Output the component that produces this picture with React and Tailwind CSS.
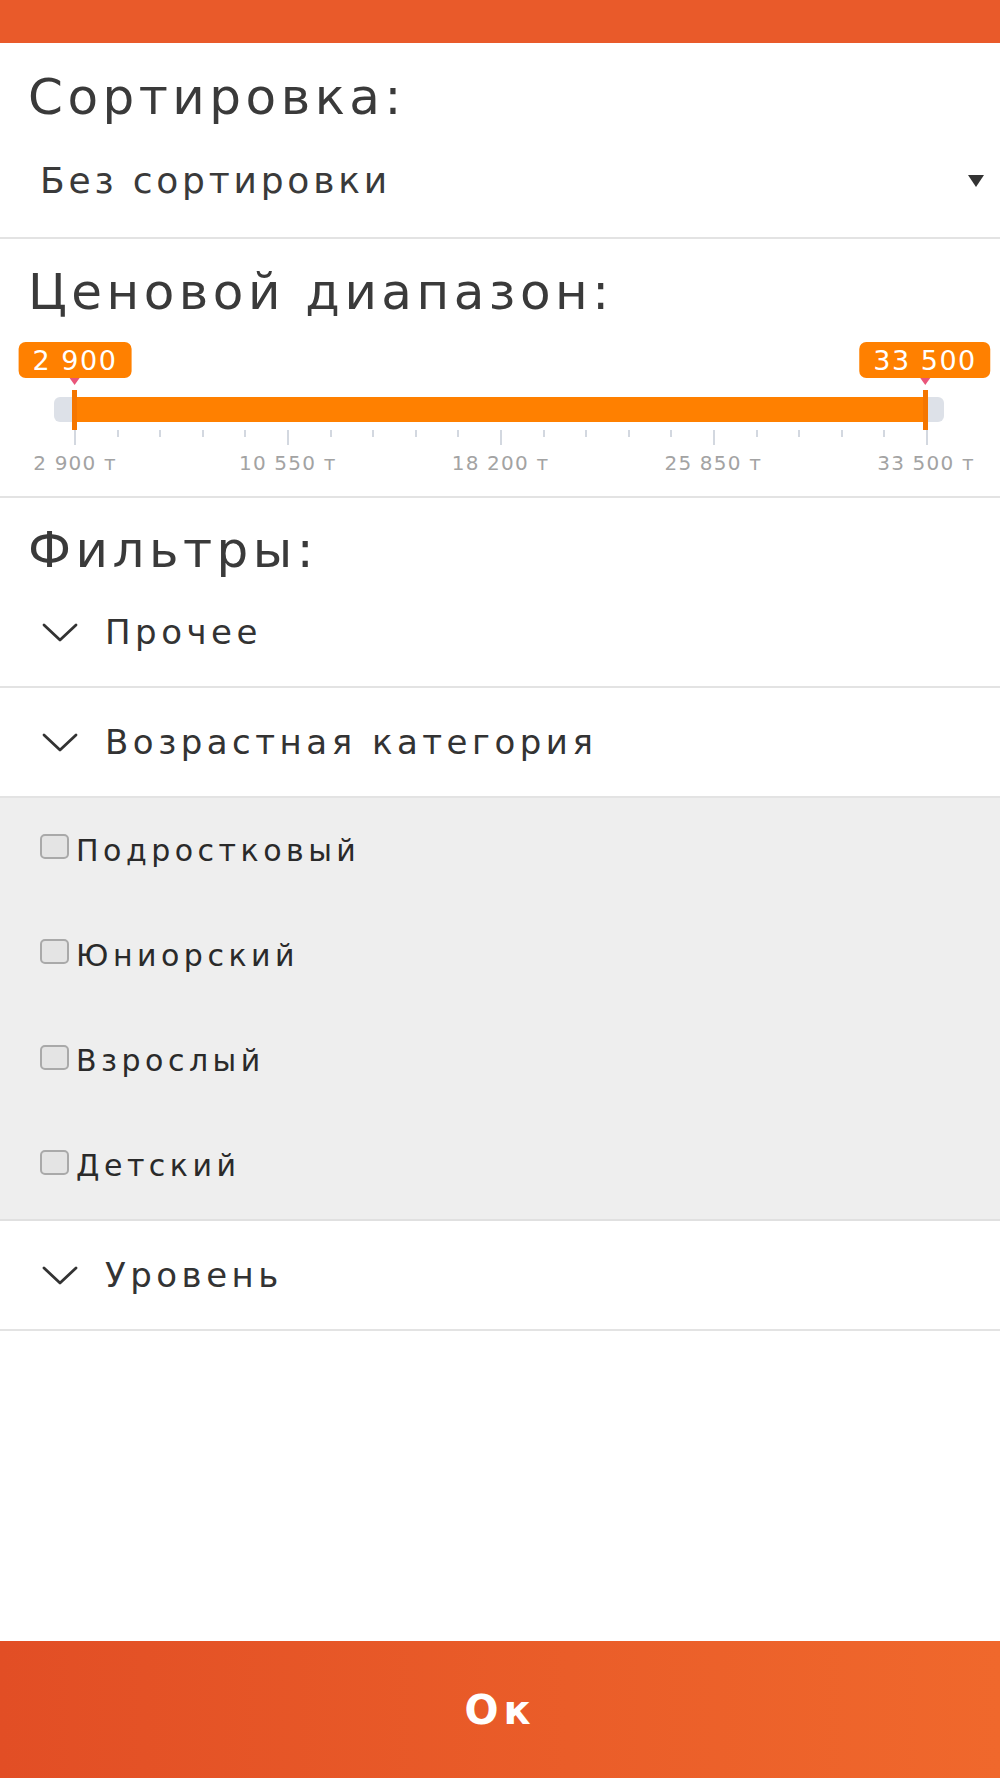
import React from "react";

// Tick marks under the price slider: 21 ticks, every 5th is a long one
const ticks = Array.from({ length: 21 }, (_, i) => i);
const axisLabels = ["2 900 т", "10 550 т", "18 200 т", "25 850 т", "33 500 т"];
const ageOptions = ["Подростковый", "Юниорский", "Взрослый", "Детский"];

const Chevron = () => (
  <svg width="36" height="19" viewBox="0 0 36 19" fill="none">
    <polyline points="2,2 18,17 34,2" stroke="#333" strokeWidth="2.8" strokeLinecap="round" strokeLinejoin="round" />
  </svg>
);

const FilterRow = ({ label }) => (
  <div className="h-[110px] flex items-center pl-[42px] border-b-2 border-[#e3e3e3]">
    <Chevron />
    <span className="ml-[27px] text-[34px] leading-none tracking-[4.5px] text-[#333]">{label}</span>
  </div>
);

const PriceTag = ({ value, left }) => (
  <div className={`absolute top-0 ${left} -translate-x-1/2 flex flex-col items-center`}>
    <div className="h-[36px] px-[14px] rounded-[7px] bg-[#ff8000] flex items-center text-white text-[27px] leading-none tracking-[1.5px] whitespace-nowrap">
      {value}
    </div>
    <div className="w-0 h-0 border-x-[5px] border-x-transparent border-t-[7px] border-t-[#e9557a]" />
  </div>
);

export default function App() {
  return (
    <div className="w-[1000px] h-[1778px] flex flex-col bg-white font-['DejaVu_Sans',sans-serif] text-[#333]">
      <div className="h-[43px] bg-[#e95a2a] shrink-0" />

      {/* Sorting */}
      <div className="pt-[29px] pb-[38px] border-b-2 border-[#e3e3e3]">
        <h2 className="pl-[28px] h-[48px] text-[50px] leading-none tracking-[4.5px] text-[#3a3a3a]">Сортировка:</h2>
        <div className="mt-[43px] h-[36px] flex items-center justify-between pl-[40px] pr-[16px]">
          <span className="text-[36px] leading-none tracking-[3.8px] text-[#3a3a3a]">Без сортировки</span>
          <span className="w-0 h-0 border-x-[8px] border-x-transparent border-t-[12px] border-t-[#333]" />
        </div>
      </div>

      {/* Price range */}
      <div className="pt-[28px] pb-[23px] border-b-2 border-[#e3e3e3]">
        <h2 className="pl-[28px] h-[48px] text-[50px] leading-none tracking-[4.5px] text-[#3a3a3a]">Ценовой диапазон:</h2>
        <div className="relative mt-[27px] pt-[55px]">
          <PriceTag value="2 900" left="left-[75px]" />
          <PriceTag value="33 500" left="left-[925px]" />

          <div className="relative ml-[54px] w-[890px] h-[25px] rounded-[6px] bg-[#dde1e8]">
            <div className="absolute inset-y-0 left-[21px] right-[18px] bg-[#ff8000]" />
            <div className="absolute -top-[7px] left-[18px] w-[5px] h-[40px] bg-[#f57600]" />
            <div className="absolute -top-[7px] left-[869px] w-[5px] h-[40px] bg-[#f57600]" />
          </div>

          <div className="mt-[8px] ml-[74px] w-[854px] flex justify-between items-start">
            {ticks.map((i) => (
              <div key={i} className={`w-[2px] bg-[#d3d8e0] ${i % 5 === 0 ? "h-[15px]" : "h-[7px]"}`} />
            ))}
          </div>

          <div className="mt-[8px] ml-[75px] w-[851px] flex justify-between">
            {axisLabels.map((l) => (
              <div key={l} className="w-0 flex justify-center">
                <span className="whitespace-nowrap text-[20px] leading-none tracking-[1.2px] text-[#a3a3a3]">{l}</span>
              </div>
            ))}
          </div>
        </div>
      </div>

      {/* Filters */}
      <div className="pt-[27px]">
        <h2 className="pl-[28px] h-[48px] mb-[5px] text-[50px] leading-none tracking-[4.5px] text-[#3a3a3a]">Фильтры:</h2>
        <FilterRow label="Прочее" />
        <FilterRow label="Возрастная категория" />
        <div className="h-[423px] flex flex-col bg-[#eeeeee] border-b-2 border-[#e0e0e0]">
          {ageOptions.map((o) => (
            <label key={o} className="flex-1 flex items-center pl-[40px]">
              <span className="w-[29px] h-[25px] mb-[8px] rounded-[5px] border-2 border-[#a9a9a9] bg-[#e4e4e4]" />
              <span className="ml-[7px] text-[30px] leading-none tracking-[4.5px] text-[#2a2a2a]">{o}</span>
            </label>
          ))}
        </div>
        <FilterRow label="Уровень" />
      </div>

      <div className="flex-1" />

      <button className="h-[137px] shrink-0 w-full flex items-center justify-center bg-gradient-to-r from-[#e24e25] to-[#f0682c] text-white text-[40px] font-semibold tracking-[5px]">
        Ок
      </button>
    </div>
  );
}
